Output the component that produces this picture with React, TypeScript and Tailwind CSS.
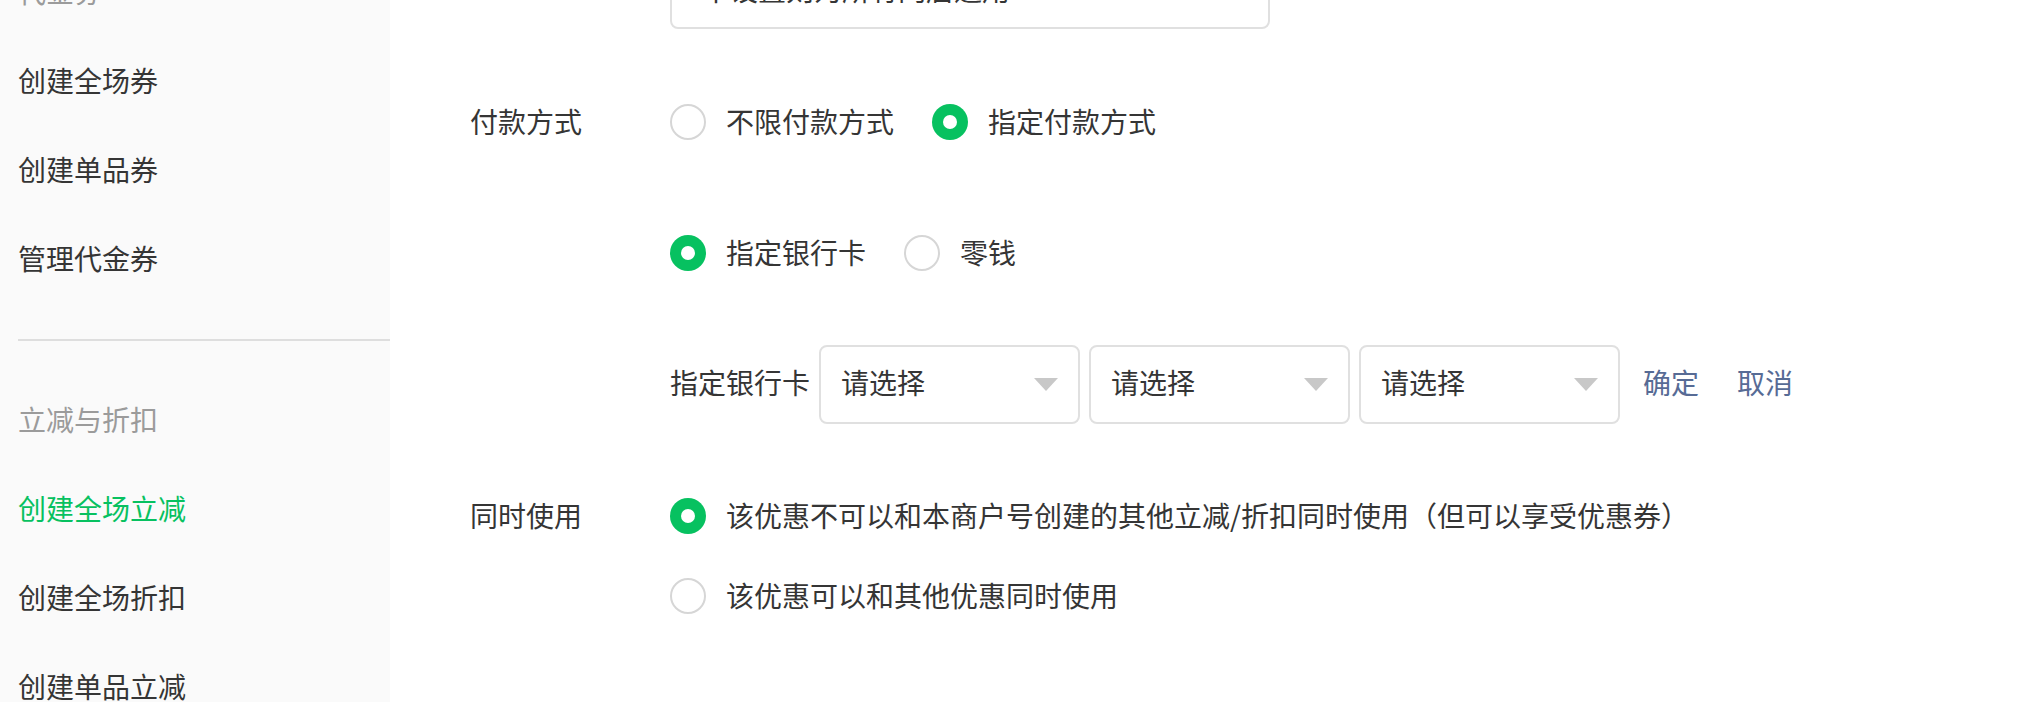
import React from 'react';

const groups = [
  { title: '代金券', items: ['创建全场券', '创建单品券', '管理代金券'] },
  { title: '立减与折扣', items: ['创建全场立减', '创建全场折扣', '创建单品立减'] },
];

function Radio({ checked }: { checked?: boolean }) {
  if (checked) {
    return (
      <span className="w-[36px] h-[36px] rounded-full bg-[#07c160] flex items-center justify-center shrink-0">
        <span className="w-[14px] h-[14px] rounded-full bg-white" />
      </span>
    );
  }
  return <span className="w-[36px] h-[36px] rounded-full border-2 border-[#d6d6d6] bg-white shrink-0" />;
}

function Option({ checked, label }: { checked?: boolean; label: string }) {
  return (
    <label className="flex items-center gap-[20px] mr-[38px]">
      <Radio checked={checked} />
      <span className="pb-[3px]">{label}</span>
    </label>
  );
}

function Select() {
  return (
    <div className="w-[261px] h-[79px] border-2 border-[#e0e0e0] rounded-[8px] bg-white flex items-center justify-between pl-[20px] pr-[20px]">
      <span className="pb-[5px]">请选择</span>
      <svg width="24" height="13" viewBox="0 0 24 13">
        <path d="M0 0 L24 0 L12 13 Z" fill="#c8c8c8" />
      </svg>
    </div>
  );
}

function Sidebar() {
  return (
    <aside className="w-[390px] h-full bg-[#fafafa] shrink-0 overflow-hidden">
      <div className="mt-[-54px]">
        {groups.map((g, gi) => (
          <div key={g.title}>
            {gi > 0 && <div className="ml-[18px] mt-[37px] mb-[33px] h-[2px] bg-[#dedede]" />}
            <div className="h-[89px] flex items-center pl-[18px] text-[#9b9b9b]">{g.title}</div>
            {g.items.map((it) => (
              <div
                key={it}
                className={
                  'h-[89px] flex items-center pl-[18px] ' +
                  (it === '创建全场立减' ? 'text-[#07c160]' : 'text-[#353535]')
                }
              >
                {it}
              </div>
            ))}
          </div>
        ))}
      </div>
    </aside>
  );
}

export default function App() {
  return (
    <div className="w-[2025px] h-[702px] overflow-hidden flex bg-white text-[28px] leading-none text-[#353535] font-['Noto_Sans_CJK_SC','Noto_Sans',sans-serif]">
      <Sidebar />
      <main className="flex-1 pl-[80px]">
        <div className="flex mt-[-51px]">
          <div className="w-[200px]" />
          <div className="w-[600px] h-[80px] border-2 border-[#e0e0e0] rounded-[8px] flex items-center pl-[30px]">
            不设置则为所有门店通用
          </div>
        </div>

        <div className="flex items-center h-[40px] mt-[73px]">
          <div className="w-[200px] pb-[3px]">付款方式</div>
          <Option label="不限付款方式" />
          <Option checked label="指定付款方式" />
        </div>

        <div className="flex items-center h-[40px] mt-[91px]">
          <div className="w-[200px]" />
          <Option checked label="指定银行卡" />
          <Option label="零钱" />
        </div>

        <div className="flex items-center mt-[72px]">
          <div className="w-[200px]" />
          <span className="mr-[9px] pb-[5px]">指定银行卡</span>
          <div className="flex gap-[9px]">
            <Select />
            <Select />
            <Select />
          </div>
          <span className="ml-[23px] pb-[5px] text-[#576b95]">确定</span>
          <span className="ml-[38px] pb-[5px] text-[#576b95]">取消</span>
        </div>

        <div className="flex items-center h-[40px] mt-[72px]">
          <div className="w-[200px] pb-[3px]">同时使用</div>
          <Option checked label="该优惠不可以和本商户号创建的其他立减/折扣同时使用（但可以享受优惠券）" />
        </div>

        <div className="flex items-center h-[40px] mt-[40px]">
          <div className="w-[200px]" />
          <Option label="该优惠可以和其他优惠同时使用" />
        </div>
      </main>
    </div>
  );
}
